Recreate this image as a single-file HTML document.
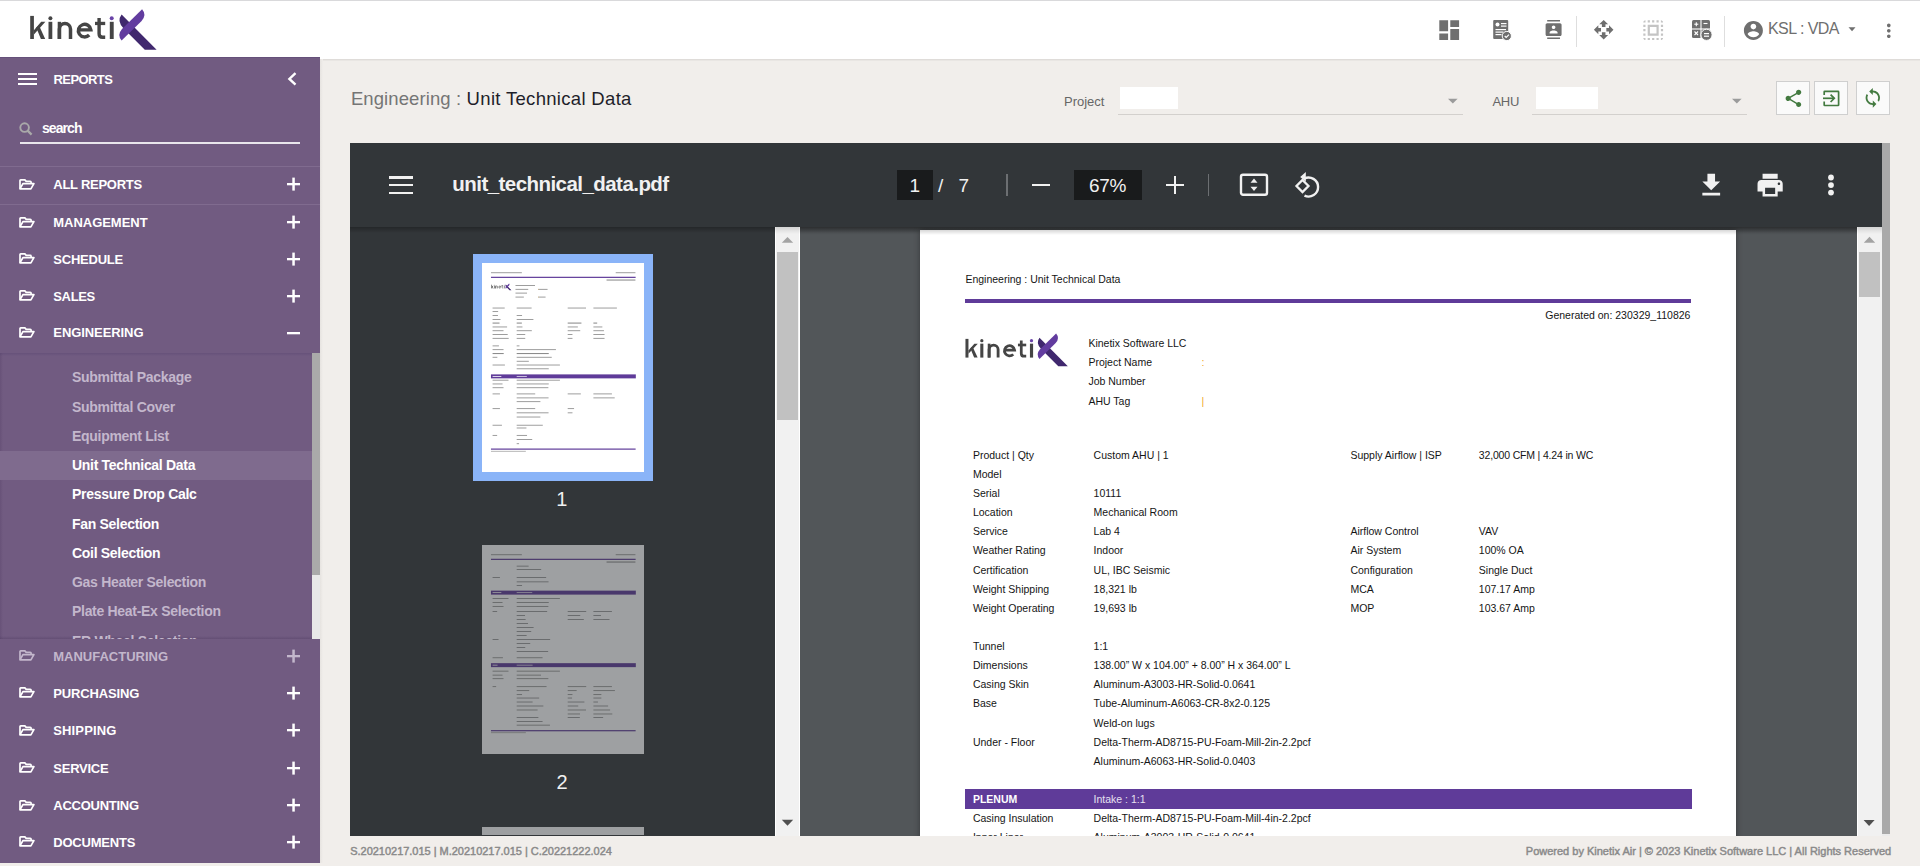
<!DOCTYPE html>
<html><head><meta charset="utf-8"><style>
html,body{margin:0;padding:0;width:1920px;height:866px;overflow:hidden;font-family:"Liberation Sans", sans-serif;}
.t{position:absolute;white-space:pre;}
.r{position:absolute;display:block;}
</style></head><body>
<div class="r" style="left:0px;top:0px;width:1920px;height:866px;background:#f1eeeb;"></div><div class="r" style="left:0px;top:0px;width:1920px;height:59px;background:#ffffff;"></div><div class="r" style="left:0px;top:0px;width:1920px;height:1px;background:#d9d9db;"></div><div class="r" style="left:320px;top:59px;width:1600px;height:2px;background:linear-gradient(#dad7d4,#eeebe8);"></div><div class="r" style="left:320px;top:59px;width:3px;height:804px;background:linear-gradient(90deg,#e6e3e0,#f1eeeb);"></div><svg class="r" style="left:0px;top:0px;" width="170" height="57" viewBox="0 0 170 57">
<g fill="#454545">
<rect x="30.2" y="15.9" width="3.7" height="23.1"/>
<polygon points="33.9,30.2 41.2,21.8 45.4,21.8 33.9,34.4"/>
<polygon points="36.2,27.6 38.9,25.2 45.2,39 40.9,39"/>
<rect x="48.5" y="21.8" width="3.8" height="17.2"/>
<circle cx="50.4" cy="18.2" r="2"/>
<rect x="57.7" y="21.8" width="3.4" height="17.2"/>
<path d="M59.4,39 V29.1 A5.55,5.55 0 0 1 70.5,29.1 V39" fill="none" stroke="#454545" stroke-width="3.5"/>
<path d="M78.4,29.9 H90.9 A6.3,6.3 0 1 0 89.2,35" fill="none" stroke="#454545" stroke-width="3.4"/>
<path d="M99.1,17.9 V33.8 Q99.1,37.3 102.6,37.3 H105.2" fill="none" stroke="#454545" stroke-width="3.4"/>
<rect x="95" y="21.8" width="10.2" height="3.3"/>
<rect x="109.8" y="21.8" width="3.9" height="17.2"/>
</g>
<circle cx="111.7" cy="18.2" r="2" fill="#6a43a8"/>
<path d="M121.6,14.6 L156.6,49.8 L144.8,49.8 L123.6,28.4 Q116.4,21.2 121.6,14.6 Z" fill="#40286e"/>
<path d="M142.1,9.2 Q147,14.8 141.6,20.9 L121.6,40.6 Q116.8,35 122,29 Z" fill="#623c9f"/>
</svg><div class="r" style="left:0px;top:57px;width:320px;height:806px;background:#715b81;"></div><div class="r" style="left:0px;top:57px;width:320px;height:1px;background:#65507a;"></div><div class="r" style="left:18px;top:73px;width:19px;height:2px;background:#ffffff;"></div><div class="r" style="left:18px;top:78px;width:19px;height:2px;background:#ffffff;"></div><div class="r" style="left:18px;top:83px;width:19px;height:2px;background:#ffffff;"></div><div class="t" style="left:53.5px;top:73.10px;font-size:13px;line-height:13px;color:#fff;font-weight:bold;letter-spacing:-0.59px;">REPORTS</div><svg class="r" style="left:280px;top:65px;" width="24" height="28" viewBox="0 0 24 28"><polyline points="15.5,8.2 9.4,13.9 15.5,19.6" fill="none" stroke="#fff" stroke-width="2.4"/></svg><svg class="r" style="left:18px;top:121px;" width="16" height="16" viewBox="0 0 16 16"><circle cx="6.6" cy="6.6" r="4.3" fill="none" stroke="#a9a9a9" stroke-width="1.9"/><line x1="9.6" y1="9.6" x2="13.6" y2="13.6" stroke="#a9a9a9" stroke-width="2.2"/></svg><div class="t" style="left:42px;top:121.35px;font-size:14px;line-height:14px;color:#fff;font-weight:bold;letter-spacing:-0.93px;">search</div><div class="r" style="left:20px;top:142px;width:280px;height:2px;background:#e9e6ec;"></div><div class="r" style="left:0px;top:166px;width:320px;height:1px;background:#806b8f;"></div><div class="r" style="left:0px;top:204px;width:320px;height:1px;background:#806b8f;"></div><svg class="r" style="left:18.8px;top:178.6px;" width="17" height="12" viewBox="0 0 17 12"><path d="M1,9.8 V1.6 Q1,0.9 1.7,0.9 H5.9 L7.2,2.4 H11.3 Q12.1,2.4 12.1,3.2 V4.4" fill="none" stroke="#fff" stroke-width="1.7" stroke-linejoin="round"/><path d="M1,9.8 L3.9,4.6 H14.9 L11.9,9.8 Z" fill="none" stroke="#fff" stroke-width="1.7" stroke-linejoin="round"/></svg><div class="t" style="left:53.3px;top:178.20px;font-size:13px;line-height:13px;color:#fff;font-weight:bold;letter-spacing:-0.259px;">ALL REPORTS</div><svg class="r" style="left:286px;top:177.4px;" width="15" height="14" viewBox="0 0 15 14"><rect x="1" y="6" width="13" height="2.3" fill="#fff"/><rect x="6.3" y="0.6" width="2.5" height="13" fill="#fff"/></svg><svg class="r" style="left:18.8px;top:216.5px;" width="17" height="12" viewBox="0 0 17 12"><path d="M1,9.8 V1.6 Q1,0.9 1.7,0.9 H5.9 L7.2,2.4 H11.3 Q12.1,2.4 12.1,3.2 V4.4" fill="none" stroke="#fff" stroke-width="1.7" stroke-linejoin="round"/><path d="M1,9.8 L3.9,4.6 H14.9 L11.9,9.8 Z" fill="none" stroke="#fff" stroke-width="1.7" stroke-linejoin="round"/></svg><div class="t" style="left:53.3px;top:216.10px;font-size:13px;line-height:13px;color:#fff;font-weight:bold;letter-spacing:-0.034px;">MANAGEMENT</div><svg class="r" style="left:286px;top:215.3px;" width="15" height="14" viewBox="0 0 15 14"><rect x="1" y="6" width="13" height="2.3" fill="#fff"/><rect x="6.3" y="0.6" width="2.5" height="13" fill="#fff"/></svg><svg class="r" style="left:18.8px;top:253.39999999999998px;" width="17" height="12" viewBox="0 0 17 12"><path d="M1,9.8 V1.6 Q1,0.9 1.7,0.9 H5.9 L7.2,2.4 H11.3 Q12.1,2.4 12.1,3.2 V4.4" fill="none" stroke="#fff" stroke-width="1.7" stroke-linejoin="round"/><path d="M1,9.8 L3.9,4.6 H14.9 L11.9,9.8 Z" fill="none" stroke="#fff" stroke-width="1.7" stroke-linejoin="round"/></svg><div class="t" style="left:53.3px;top:253.00px;font-size:13px;line-height:13px;color:#fff;font-weight:bold;letter-spacing:-0.229px;">SCHEDULE</div><svg class="r" style="left:286px;top:252.2px;" width="15" height="14" viewBox="0 0 15 14"><rect x="1" y="6" width="13" height="2.3" fill="#fff"/><rect x="6.3" y="0.6" width="2.5" height="13" fill="#fff"/></svg><svg class="r" style="left:18.8px;top:290.2px;" width="17" height="12" viewBox="0 0 17 12"><path d="M1,9.8 V1.6 Q1,0.9 1.7,0.9 H5.9 L7.2,2.4 H11.3 Q12.1,2.4 12.1,3.2 V4.4" fill="none" stroke="#fff" stroke-width="1.7" stroke-linejoin="round"/><path d="M1,9.8 L3.9,4.6 H14.9 L11.9,9.8 Z" fill="none" stroke="#fff" stroke-width="1.7" stroke-linejoin="round"/></svg><div class="t" style="left:53.3px;top:289.80px;font-size:13px;line-height:13px;color:#fff;font-weight:bold;letter-spacing:-0.36px;">SALES</div><svg class="r" style="left:286px;top:289.0px;" width="15" height="14" viewBox="0 0 15 14"><rect x="1" y="6" width="13" height="2.3" fill="#fff"/><rect x="6.3" y="0.6" width="2.5" height="13" fill="#fff"/></svg><svg class="r" style="left:18.8px;top:326.8px;" width="17" height="12" viewBox="0 0 17 12"><path d="M1,9.8 V1.6 Q1,0.9 1.7,0.9 H5.9 L7.2,2.4 H11.3 Q12.1,2.4 12.1,3.2 V4.4" fill="none" stroke="#fff" stroke-width="1.7" stroke-linejoin="round"/><path d="M1,9.8 L3.9,4.6 H14.9 L11.9,9.8 Z" fill="none" stroke="#fff" stroke-width="1.7" stroke-linejoin="round"/></svg><div class="t" style="left:53.3px;top:326.40px;font-size:13px;line-height:13px;color:#fff;font-weight:bold;letter-spacing:-0.081px;">ENGINEERING</div><svg class="r" style="left:286px;top:325.6px;" width="15" height="14" viewBox="0 0 15 14"><rect x="1" y="6" width="13" height="2.3" fill="#fff"/></svg><div class="r" style="left:0px;top:353px;width:312px;height:286px;background:#715b81;"></div><div class="r" style="left:0px;top:353px;width:312px;height:3px;background:linear-gradient(#66517a,rgba(113,91,129,0));"></div><div class="r" style="left:0px;top:636px;width:312px;height:3px;background:linear-gradient(rgba(60,40,80,0),rgba(60,40,80,0.25));"></div><div class="r" style="left:0px;top:353px;width:3px;height:286px;background:linear-gradient(90deg,rgba(60,40,80,0.18),rgba(60,40,80,0));"></div><div class="r" style="left:312px;top:353px;width:8px;height:222px;background:#aaaaaa;"></div><div class="r" style="left:312px;top:575px;width:8px;height:64px;background:#e8e8e8;"></div><div class="r" style="left:0px;top:451px;width:312px;height:29px;background:#7f6b8e;"></div><div class="r" style="left:0;top:353px;width:312px;height:286px;overflow:hidden"><div class="t" style="left:72px;top:17.25px;font-size:14px;line-height:14px;color:#c3b7cc;font-weight:bold;letter-spacing:-0.3px">Submittal Package</div><div class="t" style="left:72px;top:46.50px;font-size:14px;line-height:14px;color:#c3b7cc;font-weight:bold;letter-spacing:-0.3px">Submittal Cover</div><div class="t" style="left:72px;top:75.75px;font-size:14px;line-height:14px;color:#c3b7cc;font-weight:bold;letter-spacing:-0.3px">Equipment List</div><div class="t" style="left:72px;top:105.00px;font-size:14px;line-height:14px;color:#fff;font-weight:bold;letter-spacing:-0.3px">Unit Technical Data</div><div class="t" style="left:72px;top:134.25px;font-size:14px;line-height:14px;color:#fff;font-weight:bold;letter-spacing:-0.3px">Pressure Drop Calc</div><div class="t" style="left:72px;top:163.50px;font-size:14px;line-height:14px;color:#fff;font-weight:bold;letter-spacing:-0.3px">Fan Selection</div><div class="t" style="left:72px;top:192.75px;font-size:14px;line-height:14px;color:#fff;font-weight:bold;letter-spacing:-0.3px">Coil Selection</div><div class="t" style="left:72px;top:222.00px;font-size:14px;line-height:14px;color:#c3b7cc;font-weight:bold;letter-spacing:-0.3px">Gas Heater Selection</div><div class="t" style="left:72px;top:251.25px;font-size:14px;line-height:14px;color:#c3b7cc;font-weight:bold;letter-spacing:-0.3px">Plate Heat-Ex Selection</div><div class="t" style="left:72px;top:280.50px;font-size:14px;line-height:14px;color:#c3b7cc;font-weight:bold;letter-spacing:-0.3px">ER Wheel Selection</div></div><svg class="r" style="left:18.8px;top:650.2px;" width="17" height="12" viewBox="0 0 17 12"><path d="M1,9.8 V1.6 Q1,0.9 1.7,0.9 H5.9 L7.2,2.4 H11.3 Q12.1,2.4 12.1,3.2 V4.4" fill="none" stroke="#c3b7cc" stroke-width="1.7" stroke-linejoin="round"/><path d="M1,9.8 L3.9,4.6 H14.9 L11.9,9.8 Z" fill="none" stroke="#c3b7cc" stroke-width="1.7" stroke-linejoin="round"/></svg><div class="t" style="left:53.3px;top:649.80px;font-size:13px;line-height:13px;color:#c3b7cc;font-weight:bold;letter-spacing:-0.01px;">MANUFACTURING</div><svg class="r" style="left:286px;top:649.0px;" width="15" height="14" viewBox="0 0 15 14"><rect x="1" y="6" width="13" height="2.3" fill="#c3b7cc"/><rect x="6.3" y="0.6" width="2.5" height="13" fill="#c3b7cc"/></svg><svg class="r" style="left:18.8px;top:687.4000000000001px;" width="17" height="12" viewBox="0 0 17 12"><path d="M1,9.8 V1.6 Q1,0.9 1.7,0.9 H5.9 L7.2,2.4 H11.3 Q12.1,2.4 12.1,3.2 V4.4" fill="none" stroke="#fff" stroke-width="1.7" stroke-linejoin="round"/><path d="M1,9.8 L3.9,4.6 H14.9 L11.9,9.8 Z" fill="none" stroke="#fff" stroke-width="1.7" stroke-linejoin="round"/></svg><div class="t" style="left:53.3px;top:687.00px;font-size:13px;line-height:13px;color:#fff;font-weight:bold;letter-spacing:-0.143px;">PURCHASING</div><svg class="r" style="left:286px;top:686.2px;" width="15" height="14" viewBox="0 0 15 14"><rect x="1" y="6" width="13" height="2.3" fill="#fff"/><rect x="6.3" y="0.6" width="2.5" height="13" fill="#fff"/></svg><svg class="r" style="left:18.8px;top:724.5px;" width="17" height="12" viewBox="0 0 17 12"><path d="M1,9.8 V1.6 Q1,0.9 1.7,0.9 H5.9 L7.2,2.4 H11.3 Q12.1,2.4 12.1,3.2 V4.4" fill="none" stroke="#fff" stroke-width="1.7" stroke-linejoin="round"/><path d="M1,9.8 L3.9,4.6 H14.9 L11.9,9.8 Z" fill="none" stroke="#fff" stroke-width="1.7" stroke-linejoin="round"/></svg><div class="t" style="left:53.3px;top:724.10px;font-size:13px;line-height:13px;color:#fff;font-weight:bold;letter-spacing:0.125px;">SHIPPING</div><svg class="r" style="left:286px;top:723.3px;" width="15" height="14" viewBox="0 0 15 14"><rect x="1" y="6" width="13" height="2.3" fill="#fff"/><rect x="6.3" y="0.6" width="2.5" height="13" fill="#fff"/></svg><svg class="r" style="left:18.8px;top:762.4000000000001px;" width="17" height="12" viewBox="0 0 17 12"><path d="M1,9.8 V1.6 Q1,0.9 1.7,0.9 H5.9 L7.2,2.4 H11.3 Q12.1,2.4 12.1,3.2 V4.4" fill="none" stroke="#fff" stroke-width="1.7" stroke-linejoin="round"/><path d="M1,9.8 L3.9,4.6 H14.9 L11.9,9.8 Z" fill="none" stroke="#fff" stroke-width="1.7" stroke-linejoin="round"/></svg><div class="t" style="left:53.3px;top:762.00px;font-size:13px;line-height:13px;color:#fff;font-weight:bold;letter-spacing:-0.256px;">SERVICE</div><svg class="r" style="left:286px;top:761.2px;" width="15" height="14" viewBox="0 0 15 14"><rect x="1" y="6" width="13" height="2.3" fill="#fff"/><rect x="6.3" y="0.6" width="2.5" height="13" fill="#fff"/></svg><svg class="r" style="left:18.8px;top:799.5px;" width="17" height="12" viewBox="0 0 17 12"><path d="M1,9.8 V1.6 Q1,0.9 1.7,0.9 H5.9 L7.2,2.4 H11.3 Q12.1,2.4 12.1,3.2 V4.4" fill="none" stroke="#fff" stroke-width="1.7" stroke-linejoin="round"/><path d="M1,9.8 L3.9,4.6 H14.9 L11.9,9.8 Z" fill="none" stroke="#fff" stroke-width="1.7" stroke-linejoin="round"/></svg><div class="t" style="left:53.3px;top:799.10px;font-size:13px;line-height:13px;color:#fff;font-weight:bold;letter-spacing:-0.256px;">ACCOUNTING</div><svg class="r" style="left:286px;top:798.3px;" width="15" height="14" viewBox="0 0 15 14"><rect x="1" y="6" width="13" height="2.3" fill="#fff"/><rect x="6.3" y="0.6" width="2.5" height="13" fill="#fff"/></svg><svg class="r" style="left:18.8px;top:836.2px;" width="17" height="12" viewBox="0 0 17 12"><path d="M1,9.8 V1.6 Q1,0.9 1.7,0.9 H5.9 L7.2,2.4 H11.3 Q12.1,2.4 12.1,3.2 V4.4" fill="none" stroke="#fff" stroke-width="1.7" stroke-linejoin="round"/><path d="M1,9.8 L3.9,4.6 H14.9 L11.9,9.8 Z" fill="none" stroke="#fff" stroke-width="1.7" stroke-linejoin="round"/></svg><div class="t" style="left:53.3px;top:835.80px;font-size:13px;line-height:13px;color:#fff;font-weight:bold;letter-spacing:-0.222px;">DOCUMENTS</div><svg class="r" style="left:286px;top:835.0px;" width="15" height="14" viewBox="0 0 15 14"><rect x="1" y="6" width="13" height="2.3" fill="#fff"/><rect x="6.3" y="0.6" width="2.5" height="13" fill="#fff"/></svg><svg class="r" style="left:1435.70px;top:16.79px" width="26.40" height="26.40" viewBox="0 0 24 24"><path d="M3 13h8V3H3v10zm0 8h8v-6H3v6zm10 0h8V11h-8v10zm0-18v6h8V3h-8z" fill="#6f6f6f"/></svg><svg class="r" style="left:1492px;top:19px;" width="20" height="22" viewBox="0 0 20 22"><rect x="1.2" y="1" width="15" height="19" rx="1" fill="#6f6f6f"/><g fill="#fff"><circle cx="5.5" cy="5.5" r="2"/><rect x="9" y="4" width="5.5" height="1.2"/><rect x="9" y="6.5" width="5.5" height="1.2"/><rect x="3.5" y="10" width="10.5" height="1.2"/><rect x="3.5" y="12.5" width="8" height="1.2"/><rect x="3.5" y="15" width="6" height="1.2"/></g><circle cx="14.8" cy="17" r="4.6" fill="#6f6f6f" stroke="#fff" stroke-width="1"/><polyline points="12.7,17 14.2,18.5 17,15.6" fill="none" stroke="#fff" stroke-width="1.2"/></svg><svg class="r" style="left:1544.00px;top:19.90px" width="19.20" height="19.20" viewBox="0 0 24 24"><path d="M20 0H4v2h16V0zM4 24h16v-2H4v2zM20 4H4c-1.1 0-2 .9-2 2v12c0 1.1.9 2 2 2h16c1.1 0 2-.9 2-2V6c0-1.1-.9-2-2-2zm-8 2.75c1.24 0 2.25 1.01 2.25 2.25s-1.01 2.25-2.25 2.25S9.75 10.24 9.75 9 10.76 6.75 12 6.75zM17 17H7v-1.5c0-1.67 3.33-2.5 5-2.5s5 .83 5 2.5V17z" fill="#6f6f6f"/></svg><div class="r" style="left:1576px;top:16px;width:1px;height:31px;background:#dedede;"></div><svg class="r" style="left:1593.11px;top:19.11px" width="21.36" height="21.36" viewBox="0 0 24 24"><path d="M10 9h4V6h3l-5-5-5 5h3v3zm-1 1H6V7l-5 5 5 5v-3h3v-4zm14 2l-5-5v3h-3v4h3v3l5-5zm-9 3h-4v3H7l5 5 5-5h-3v-3z" fill="#6f6f6f"/></svg><svg class="r" style="left:1639.70px;top:16.79px" width="26.40" height="26.40" viewBox="0 0 24 24"><path d="M3 5h2V3c-1.1 0-2 .9-2 2zm0 8h2v-2H3v2zm4 8h2v-2H7v2zM3 9h2V7H3v2zm10-6h-2v2h2V3zm6 0v2h2c0-1.1-.9-2-2-2zM5 21v-2H3c0 1.1.9 2 2 2zm-2-4h2v-2H3v2zM9 3H7v2h2V3zm2 18h2v-2h-2v2zm8-8h2v-2h-2v2zm0 8c1.1 0 2-.9 2-2h-2v2zm0-12h2V7h-2v2zm0 8h2v-2h-2v2zm-4 4h2v-2h-2v2zm0-16h2V3h-2v2zM7 17h10V7H7v10zm2-8h6v6H9V9z" fill="#c4c4c4"/></svg><svg class="r" style="left:1691px;top:19px;" width="23" height="22" viewBox="0 0 23 22"><rect x="1" y="1" width="18" height="18" rx="1.5" fill="#6f6f6f"/><g stroke="#fff" stroke-width="1.1"><line x1="1" y1="10" x2="19" y2="10"/><line x1="10" y1="1" x2="10" y2="19"/><line x1="3.3" y1="5.2" x2="7.3" y2="5.2"/><line x1="5.3" y1="3.2" x2="5.3" y2="7.2"/><line x1="12.5" y1="4.5" x2="16.5" y2="4.5"/><line x1="3.5" y1="12.5" x2="7" y2="16"/><line x1="7" y1="12.5" x2="3.5" y2="16"/></g><circle cx="15.5" cy="15.8" r="5.6" fill="#6f6f6f" stroke="#fff" stroke-width="1"/><g stroke="#fff" stroke-width="1.2"><line x1="13" y1="14.6" x2="18" y2="14.6"/><line x1="13" y1="17.2" x2="18" y2="17.2"/></g></svg><div class="r" style="left:1724px;top:16px;width:1px;height:31px;background:#dedede;"></div><svg class="r" style="left:1741.97px;top:19.06px" width="22.80" height="22.80" viewBox="0 0 24 24"><path d="M12 2C6.48 2 2 6.48 2 12s4.48 10 10 10 10-4.48 10-10S17.52 2 12 2zm0 3c1.66 0 3 1.34 3 3s-1.34 3-3 3-3-1.34-3-3 1.34-3 3-3zm0 14.2c-2.5 0-4.71-1.28-6-3.22.03-1.99 4-3.08 6-3.08 1.99 0 5.970 1.09 6 3.08-1.29 1.94-3.5 3.22-6 3.22z" fill="#6f6f6f"/></svg><div class="t" style="left:1768px;top:21.26px;font-size:16px;line-height:16px;color:#6f6f6f;font-weight:normal;letter-spacing:-0.55px;">KSL : VDA</div><svg class="r" style="left:1848px;top:27px;" width="9" height="5" viewBox="0 0 9 5"><polygon points="0.5,0.3 7.5,0.3 4,4.3" fill="#6f6f6f"/></svg><svg class="r" style="left:1877.80px;top:19.80px" width="21.60" height="21.60" viewBox="0 0 24 24"><path d="M12 8c1.1 0 2-.9 2-2s-.9-2-2-2-2 .9-2 2 .9 2 2 2zm0 2c-1.1 0-2 .9-2 2s.9 2 2 2 2-.9 2-2-.9-2-2-2zm0 6c-1.1 0-2 .9-2 2s.9 2 2 2 2-.9 2-2-.9-2-2-2z" fill="#6f6f6f"/></svg><div class="t" style="left:350.9px;top:89.54px;font-size:18.5px;line-height:18.5px;color:#757575;font-weight:normal;letter-spacing:0.1px;">Engineering : </div><div class="t" style="left:466.6px;top:89.54px;font-size:18.5px;line-height:18.5px;color:#1e1e2a;font-weight:normal;letter-spacing:0.32px;">Unit Technical Data</div><div class="t" style="left:1064px;top:94.70px;font-size:13px;line-height:13px;color:#666;font-weight:normal;letter-spacing:0px;">Project</div><div class="r" style="left:1120px;top:87px;width:58px;height:22px;background:#fff;"></div><div class="r" style="left:1118px;top:114px;width:345px;height:1px;background:#d3d0cd;"></div><svg class="r" style="left:1447px;top:98px;" width="12" height="7" viewBox="0 0 12 7"><polygon points="1,0.8 10.6,0.8 5.8,5.6" fill="#9b9b9b"/></svg><div class="t" style="left:1492.5px;top:94.70px;font-size:13px;line-height:13px;color:#666;font-weight:normal;letter-spacing:-0.3px;">AHU</div><div class="r" style="left:1536px;top:87px;width:62px;height:22px;background:#fff;"></div><div class="r" style="left:1532px;top:114px;width:215px;height:1px;background:#d3d0cd;"></div><svg class="r" style="left:1731px;top:98px;" width="12" height="7" viewBox="0 0 12 7"><polygon points="1,0.8 10.6,0.8 5.8,5.6" fill="#9b9b9b"/></svg><div class="r" style="left:1776px;top:81px;width:34px;height:34px;background:#fafafa;box-sizing:border-box;border:1px solid #cfcfcf"></div><div class="r" style="left:1814px;top:81px;width:34px;height:34px;background:#fafafa;box-sizing:border-box;border:1px solid #cfcfcf"></div><div class="r" style="left:1856px;top:81px;width:34px;height:34px;background:#fafafa;box-sizing:border-box;border:1px solid #cfcfcf"></div><svg class="r" style="left:1782.59px;top:87.80px" width="20.88" height="20.88" viewBox="0 0 24 24"><path d="M18 16.08c-.76 0-1.44.3-1.96.77L8.91 12.7c.05-.23.09-.46.09-.7s-.04-.47-.09-.7l7.05-4.11c.54.5 1.25.81 2.04.81 1.66 0 3-1.34 3-3s-1.34-3-3-3-3 1.34-3 3c0 .24.04.47.09.7L8.040 9.81C7.5 9.31 6.79 9 6 9c-1.66 0-3 1.34-3 3s1.34 3 3 3c.79 0 1.5-.31 2.04-.81l7.12 4.16c-.05.21-.08.43-.08.65 0 1.61 1.31 2.92 2.92 2.92 1.61 0 2.92-1.31 2.92-2.92s-1.31-2.92-2.92-2.92z" fill="#437a40"/></svg><svg class="r" style="left:1814px;top:81px;" width="34" height="34" viewBox="0 0 34 34"><path d="M10.2,14 V10.8 Q10.2,10.3 10.7,10.3 H24 Q24.6,10.3 24.6,10.9 V23.9 Q24.6,24.5 24,24.5 H10.7 Q10.2,24.5 10.2,24 V20.6" fill="none" stroke="#437a40" stroke-width="1.7"/><line x1="9" y1="17.3" x2="20.2" y2="17.3" stroke="#437a40" stroke-width="1.7"/><polyline points="16.6,13.6 20.3,17.3 16.6,21" fill="none" stroke="#437a40" stroke-width="1.7"/></svg><svg class="r" style="left:1862.10px;top:87.20px" width="21.60" height="21.60" viewBox="0 0 24 24"><path d="M12 4V1L8 5l4 4V6c3.31 0 6 2.69 6 6 0 1.01-.25 1.97-.7 2.8l1.46 1.46C19.54 15.03 20 13.57 20 12c0-4.42-3.58-8-8-8zm0 14c-3.31 0-6-2.69-6-6 0-1.01.25-1.97.7-2.8L5.24 7.74C4.46 8.97 4 10.43 4 12c0 4.420 3.58 8 8 8v3l4-4-4-4v3z" fill="#437a40"/></svg><div class="r" style="left:1882px;top:143px;width:8px;height:693px;background:#ebebeb;"></div><div class="r" style="left:1882px;top:143px;width:8px;height:691px;background:#a9a9a9;"></div><div class="r" style="left:350px;top:143px;width:1532px;height:84px;background:#323639;"></div><div class="r" style="left:350px;top:227px;width:425px;height:609px;background:#323639;"></div><div class="r" style="left:800px;top:227px;width:1057px;height:609px;background:#525659;"></div><div class="r" style="left:350px;top:227px;width:1532px;height:6px;background:linear-gradient(rgba(0,0,0,0.28),rgba(0,0,0,0));"></div><div class="r" style="left:389px;top:176.3px;width:24px;height:2.4px;background:#f1f1f1;"></div><div class="r" style="left:389px;top:184px;width:24px;height:2.4px;background:#f1f1f1;"></div><div class="r" style="left:389px;top:191.5px;width:24px;height:2.4px;background:#f1f1f1;"></div><div class="t" style="left:452.3px;top:174.25px;font-size:20.5px;line-height:20.5px;color:#f1f1f1;font-weight:bold;letter-spacing:-0.55px;">unit_technical_data.pdf</div><div class="r" style="left:897px;top:170px;width:36px;height:30px;background:#191b1c;"></div><div class="t" style="left:909.5px;top:175.52px;font-size:19px;line-height:19px;color:#f1f1f1;font-weight:normal;letter-spacing:0px;">1</div><div class="t" style="left:938px;top:175.52px;font-size:19px;line-height:19px;color:#f1f1f1;font-weight:normal;letter-spacing:0px;">/</div><div class="t" style="left:958.5px;top:175.52px;font-size:19px;line-height:19px;color:#f1f1f1;font-weight:normal;letter-spacing:0px;">7</div><div class="r" style="left:1006px;top:174px;width:1.5px;height:22px;background:#6c6f72;"></div><div class="r" style="left:1032px;top:183.7px;width:18px;height:2.2px;background:#f1f1f1;"></div><div class="r" style="left:1074px;top:170px;width:68px;height:30px;background:#191b1c;"></div><div class="t" style="left:1089px;top:175.52px;font-size:19px;line-height:19px;color:#f1f1f1;font-weight:normal;letter-spacing:-0.3px;">67%</div><div class="r" style="left:1166px;top:183.7px;width:18px;height:2.2px;background:#f1f1f1;"></div><div class="r" style="left:1174px;top:176px;width:2.2px;height:18px;background:#f1f1f1;"></div><div class="r" style="left:1207.5px;top:174px;width:1.5px;height:22px;background:#6c6f72;"></div><svg class="r" style="left:1238px;top:172px;" width="32" height="26" viewBox="0 0 32 26"><rect x="3" y="2.8" width="26" height="20" rx="2" fill="none" stroke="#f1f1f1" stroke-width="2.4"/><polygon points="16,6.5 19.5,10.8 12.5,10.8" fill="#f1f1f1"/><polygon points="16,19 19.5,14.7 12.5,14.7" fill="#f1f1f1"/></svg><svg class="r" style="left:1292px;top:170px;" width="32" height="30" viewBox="0 0 32 30"><path d="M12.2,8.6 A9.5,9.5 0 1 1 12.5,25.6" fill="none" stroke="#f1f1f1" stroke-width="2.4"/><polygon points="13.8,2 13.8,11.8 8.2,6.9" fill="#f1f1f1"/><polygon points="10.5,10 16.5,16 10.5,22 4.5,16" fill="none" stroke="#f1f1f1" stroke-width="2.3"/></svg><svg class="r" style="left:1695.55px;top:169.95px" width="30.48" height="30.48" viewBox="0 0 24 24"><path d="M19 9h-4V3H9v6H5l7 7 7-7zM5 18v2h14v-2H5z" fill="#f1f1f1"/></svg><svg class="r" style="left:1755.48px;top:169.98px" width="30.24" height="30.24" viewBox="0 0 24 24"><path d="M19 8H5c-1.66 0-3 1.34-3 3v6h4v4h12v-4h4v-6c0-1.66-1.340-3-3-3zm-3 11H8v-5h8v5zm3-7c-.55 0-1-.45-1-1s.45-1 1-1 1 .45 1 1-.45 1-1 1zm-1-9H6v4h12V3z" fill="#f1f1f1"/></svg><svg class="r" style="left:1824px;top:170px;" width="14" height="30" viewBox="0 0 14 30"><g fill="#f1f1f1"><circle cx="7" cy="7.5" r="2.9"/><circle cx="7" cy="15.1" r="2.9"/><circle cx="7" cy="22.6" r="2.9"/></g></svg><div class="r" style="left:800px;top:227px;width:1057px;height:609px;overflow:hidden"><div class="r" style="left:120px;top:3px;width:816px;height:1056px;background:#fff;box-shadow:0 0 6px rgba(0,0,0,0.35)"><div class="t" style="left:45.4px;top:43.91px;font-size:10.5px;line-height:10.5px;color:#151515;font-weight:normal;letter-spacing:0px">Engineering : Unit Technical Data</div><div class="r" style="left:45px;top:69.1px;width:726px;height:3.6px;background:#5f3b99"></div><div class="t" style="right:45.60000000000002px;top:80.31px;font-size:10.5px;line-height:10.5px;color:#151515;font-weight:normal;letter-spacing:0px">Generated on: 230329_110826</div><svg class="r" style="left:20.5px;top:95.9px;transform:scale(0.81);transform-origin:0 0" width="170" height="57" viewBox="0 0 170 57">
<g fill="#454545">
<rect x="30.2" y="15.9" width="3.7" height="23.1"/>
<polygon points="33.9,30.2 41.2,21.8 45.4,21.8 33.9,34.4"/>
<polygon points="36.2,27.6 38.9,25.2 45.2,39 40.9,39"/>
<rect x="48.5" y="21.8" width="3.8" height="17.2"/>
<circle cx="50.4" cy="18.2" r="2"/>
<rect x="57.7" y="21.8" width="3.4" height="17.2"/>
<path d="M59.4,39 V29.1 A5.55,5.55 0 0 1 70.5,29.1 V39" fill="none" stroke="#454545" stroke-width="3.5"/>
<path d="M78.4,29.9 H90.9 A6.3,6.3 0 1 0 89.2,35" fill="none" stroke="#454545" stroke-width="3.4"/>
<path d="M99.1,17.9 V33.8 Q99.1,37.3 102.6,37.3 H105.2" fill="none" stroke="#454545" stroke-width="3.4"/>
<rect x="95" y="21.8" width="10.2" height="3.3"/>
<rect x="109.8" y="21.8" width="3.9" height="17.2"/>
</g>
<circle cx="111.7" cy="18.2" r="2" fill="#6a43a8"/>
<path d="M121.6,14.6 L156.6,49.8 L144.8,49.8 L123.6,28.4 Q116.4,21.2 121.6,14.6 Z" fill="#40286e"/>
<path d="M142.1,9.2 Q147,14.8 141.6,20.9 L121.6,40.6 Q116.8,35 122,29 Z" fill="#623c9f"/>
</svg><div class="t" style="left:168.4px;top:107.91px;font-size:10.5px;line-height:10.5px;color:#151515;font-weight:normal;letter-spacing:0px">Kinetix Software LLC</div><div class="t" style="left:168.4px;top:126.91px;font-size:10.5px;line-height:10.5px;color:#151515;font-weight:normal;letter-spacing:0px">Project Name</div><div class="t" style="left:168.4px;top:146.01px;font-size:10.5px;line-height:10.5px;color:#151515;font-weight:normal;letter-spacing:0px">Job Number</div><div class="t" style="left:168.4px;top:165.51px;font-size:10.5px;line-height:10.5px;color:#151515;font-weight:normal;letter-spacing:0px">AHU Tag</div><div class="t" style="left:281.5px;top:126.91px;font-size:10.5px;line-height:10.5px;color:#f0a830;font-weight:normal;letter-spacing:0px">:</div><div class="t" style="left:281.5px;top:165.51px;font-size:10.5px;line-height:10.5px;color:#f0a830;font-weight:normal;letter-spacing:0px">|</div><div class="t" style="left:52.9px;top:220.41px;font-size:10.5px;line-height:10.5px;color:#151515;font-weight:normal;letter-spacing:0px">Product | Qty</div><div class="t" style="left:173.6px;top:220.41px;font-size:10.5px;line-height:10.5px;color:#151515;font-weight:normal;letter-spacing:0px">Custom AHU | 1</div><div class="t" style="left:430.4px;top:220.41px;font-size:10.5px;line-height:10.5px;color:#151515;font-weight:normal;letter-spacing:0px">Supply Airflow | ISP</div><div class="t" style="left:558.8px;top:220.41px;font-size:10.5px;line-height:10.5px;color:#151515;font-weight:normal;letter-spacing:0px"><span style="letter-spacing:-0.17px">32,000 CFM | 4.24 in WC</span></div><div class="t" style="left:52.9px;top:239.11px;font-size:10.5px;line-height:10.5px;color:#151515;font-weight:normal;letter-spacing:0px">Model</div><div class="t" style="left:52.9px;top:258.21px;font-size:10.5px;line-height:10.5px;color:#151515;font-weight:normal;letter-spacing:0px">Serial</div><div class="t" style="left:173.6px;top:258.21px;font-size:10.5px;line-height:10.5px;color:#151515;font-weight:normal;letter-spacing:0px">10111</div><div class="t" style="left:52.9px;top:277.41px;font-size:10.5px;line-height:10.5px;color:#151515;font-weight:normal;letter-spacing:0px">Location</div><div class="t" style="left:173.6px;top:277.41px;font-size:10.5px;line-height:10.5px;color:#151515;font-weight:normal;letter-spacing:0px">Mechanical Room</div><div class="t" style="left:52.9px;top:296.31px;font-size:10.5px;line-height:10.5px;color:#151515;font-weight:normal;letter-spacing:0px">Service</div><div class="t" style="left:173.6px;top:296.31px;font-size:10.5px;line-height:10.5px;color:#151515;font-weight:normal;letter-spacing:0px">Lab 4</div><div class="t" style="left:430.4px;top:296.31px;font-size:10.5px;line-height:10.5px;color:#151515;font-weight:normal;letter-spacing:0px">Airflow Control</div><div class="t" style="left:558.8px;top:296.31px;font-size:10.5px;line-height:10.5px;color:#151515;font-weight:normal;letter-spacing:0px">VAV</div><div class="t" style="left:52.9px;top:315.41px;font-size:10.5px;line-height:10.5px;color:#151515;font-weight:normal;letter-spacing:0px">Weather Rating</div><div class="t" style="left:173.6px;top:315.41px;font-size:10.5px;line-height:10.5px;color:#151515;font-weight:normal;letter-spacing:0px">Indoor</div><div class="t" style="left:430.4px;top:315.41px;font-size:10.5px;line-height:10.5px;color:#151515;font-weight:normal;letter-spacing:0px">Air System</div><div class="t" style="left:558.8px;top:315.41px;font-size:10.5px;line-height:10.5px;color:#151515;font-weight:normal;letter-spacing:0px">100% OA</div><div class="t" style="left:52.9px;top:335.11px;font-size:10.5px;line-height:10.5px;color:#151515;font-weight:normal;letter-spacing:0px">Certification</div><div class="t" style="left:173.6px;top:335.11px;font-size:10.5px;line-height:10.5px;color:#151515;font-weight:normal;letter-spacing:0px">UL, IBC Seismic</div><div class="t" style="left:430.4px;top:335.11px;font-size:10.5px;line-height:10.5px;color:#151515;font-weight:normal;letter-spacing:0px">Configuration</div><div class="t" style="left:558.8px;top:335.11px;font-size:10.5px;line-height:10.5px;color:#151515;font-weight:normal;letter-spacing:0px">Single Duct</div><div class="t" style="left:52.9px;top:354.21px;font-size:10.5px;line-height:10.5px;color:#151515;font-weight:normal;letter-spacing:0px">Weight Shipping</div><div class="t" style="left:173.6px;top:354.21px;font-size:10.5px;line-height:10.5px;color:#151515;font-weight:normal;letter-spacing:0px">18,321 lb</div><div class="t" style="left:430.4px;top:354.21px;font-size:10.5px;line-height:10.5px;color:#151515;font-weight:normal;letter-spacing:0px">MCA</div><div class="t" style="left:558.8px;top:354.21px;font-size:10.5px;line-height:10.5px;color:#151515;font-weight:normal;letter-spacing:0px">107.17 Amp</div><div class="t" style="left:52.9px;top:373.11px;font-size:10.5px;line-height:10.5px;color:#151515;font-weight:normal;letter-spacing:0px">Weight Operating</div><div class="t" style="left:173.6px;top:373.11px;font-size:10.5px;line-height:10.5px;color:#151515;font-weight:normal;letter-spacing:0px">19,693 lb</div><div class="t" style="left:430.4px;top:373.11px;font-size:10.5px;line-height:10.5px;color:#151515;font-weight:normal;letter-spacing:0px">MOP</div><div class="t" style="left:558.8px;top:373.11px;font-size:10.5px;line-height:10.5px;color:#151515;font-weight:normal;letter-spacing:0px">103.67 Amp</div><div class="t" style="left:52.9px;top:411.01px;font-size:10.5px;line-height:10.5px;color:#151515;font-weight:normal;letter-spacing:0px">Tunnel</div><div class="t" style="left:173.6px;top:411.01px;font-size:10.5px;line-height:10.5px;color:#151515;font-weight:normal;letter-spacing:0px">1:1</div><div class="t" style="left:52.9px;top:429.91px;font-size:10.5px;line-height:10.5px;color:#151515;font-weight:normal;letter-spacing:0px">Dimensions</div><div class="t" style="left:173.6px;top:429.91px;font-size:10.5px;line-height:10.5px;color:#151515;font-weight:normal;letter-spacing:0px">138.00&#8221; W x 104.00&#8221; + 8.00&#8221; H x 364.00&#8221; L</div><div class="t" style="left:52.9px;top:449.31px;font-size:10.5px;line-height:10.5px;color:#151515;font-weight:normal;letter-spacing:0px">Casing Skin</div><div class="t" style="left:173.6px;top:449.31px;font-size:10.5px;line-height:10.5px;color:#151515;font-weight:normal;letter-spacing:0px">Aluminum-A3003-HR-Solid-0.0641</div><div class="t" style="left:52.9px;top:468.21px;font-size:10.5px;line-height:10.5px;color:#151515;font-weight:normal;letter-spacing:0px">Base</div><div class="t" style="left:173.6px;top:468.21px;font-size:10.5px;line-height:10.5px;color:#151515;font-weight:normal;letter-spacing:0px">Tube-Aluminum-A6063-CR-8x2-0.125</div><div class="t" style="left:173.6px;top:488.11px;font-size:10.5px;line-height:10.5px;color:#151515;font-weight:normal;letter-spacing:0px">Weld-on lugs</div><div class="t" style="left:52.9px;top:507.01px;font-size:10.5px;line-height:10.5px;color:#151515;font-weight:normal;letter-spacing:0px">Under - Floor</div><div class="t" style="left:173.6px;top:507.01px;font-size:10.5px;line-height:10.5px;color:#151515;font-weight:normal;letter-spacing:0px">Delta-Therm-AD8715-PU-Foam-Mill-2in-2.2pcf</div><div class="t" style="left:173.6px;top:525.91px;font-size:10.5px;line-height:10.5px;color:#151515;font-weight:normal;letter-spacing:0px">Aluminum-A6063-HR-Solid-0.0403</div><div class="t" style="left:52.9px;top:583.11px;font-size:10.5px;line-height:10.5px;color:#151515;font-weight:normal;letter-spacing:0px">Casing Insulation</div><div class="t" style="left:173.6px;top:583.11px;font-size:10.5px;line-height:10.5px;color:#151515;font-weight:normal;letter-spacing:0px">Delta-Therm-AD8715-PU-Foam-Mill-4in-2.2pcf</div><div class="t" style="left:52.9px;top:602.11px;font-size:10.5px;line-height:10.5px;color:#151515;font-weight:normal;letter-spacing:0px">Inner Liner</div><div class="t" style="left:173.6px;top:602.11px;font-size:10.5px;line-height:10.5px;color:#151515;font-weight:normal;letter-spacing:0px">Aluminum-A3003-HR-Solid-0.0641</div><div class="t" style="left:52.9px;top:621.11px;font-size:10.5px;line-height:10.5px;color:#151515;font-weight:normal;letter-spacing:0px">Floor Finish</div><div class="t" style="left:173.6px;top:621.11px;font-size:10.5px;line-height:10.5px;color:#151515;font-weight:normal;letter-spacing:0px">Aluminum-A3003-HR-Tread-0.125</div><div class="t" style="left:52.9px;top:652.11px;font-size:10.5px;line-height:10.5px;color:#151515;font-weight:normal;letter-spacing:0px">Damper</div><div class="t" style="left:173.6px;top:652.11px;font-size:10.5px;line-height:10.5px;color:#151515;font-weight:normal;letter-spacing:0px">OBD | Ruskin CD50</div><div class="t" style="left:430.4px;top:652.11px;font-size:10.5px;line-height:10.5px;color:#151515;font-weight:normal;letter-spacing:0px">Supply Airflow</div><div class="t" style="left:558.8px;top:652.11px;font-size:10.5px;line-height:10.5px;color:#151515;font-weight:normal;letter-spacing:0px">Supply 32,000 CFM</div><div class="t" style="left:173.6px;top:671.71px;font-size:10.5px;line-height:10.5px;color:#151515;font-weight:normal;letter-spacing:0px">Opposed Blade | Aluminum Frame</div><div class="t" style="left:558.8px;top:671.71px;font-size:10.5px;line-height:10.5px;color:#151515;font-weight:normal;letter-spacing:0px">1,000 fpm | 0.07 in WC</div><div class="t" style="left:173.6px;top:691.11px;font-size:10.5px;line-height:10.5px;color:#151515;font-weight:normal;letter-spacing:0px">(1) 104.00 W x 88.00 H in</div><div class="t" style="left:52.9px;top:725.71px;font-size:10.5px;line-height:10.5px;color:#151515;font-weight:normal;letter-spacing:0px">Damper</div><div class="t" style="left:173.6px;top:725.71px;font-size:10.5px;line-height:10.5px;color:#151515;font-weight:normal;letter-spacing:0px">OBD | Ruskin CD50</div><div class="t" style="left:430.4px;top:725.71px;font-size:10.5px;line-height:10.5px;color:#151515;font-weight:normal;letter-spacing:0px">Supply</div><div class="t" style="left:173.6px;top:746.71px;font-size:10.5px;line-height:10.5px;color:#151515;font-weight:normal;letter-spacing:0px">Opposed Blade | Aluminum Frame</div><div class="t" style="left:430.4px;top:746.71px;font-size:10.5px;line-height:10.5px;color:#151515;font-weight:normal;letter-spacing:0px">Spec</div><div class="t" style="left:173.6px;top:767.81px;font-size:10.5px;line-height:10.5px;color:#151515;font-weight:normal;letter-spacing:0px">(1) 104.00 W x 88.00 H in</div><div class="t" style="left:52.9px;top:808.51px;font-size:10.5px;line-height:10.5px;color:#151515;font-weight:normal;letter-spacing:0px">Drain Pan</div><div class="t" style="left:173.6px;top:808.51px;font-size:10.5px;line-height:10.5px;color:#151515;font-weight:normal;letter-spacing:0px">Single 304SS Sloped 16 GA</div><div class="t" style="left:173.6px;top:823.11px;font-size:10.5px;line-height:10.5px;color:#151515;font-weight:normal;letter-spacing:0px">3/4 in NPT</div><div class="t" style="left:52.9px;top:860.11px;font-size:10.5px;line-height:10.5px;color:#151515;font-weight:normal;letter-spacing:0px">Light</div><div class="t" style="left:173.6px;top:860.11px;font-size:10.5px;line-height:10.5px;color:#151515;font-weight:normal;letter-spacing:0px">Vapor Tight</div><div class="t" style="left:173.6px;top:881.11px;font-size:10.5px;line-height:10.5px;color:#151515;font-weight:normal;letter-spacing:0px">LED 20W | 120V</div><div class="t" style="left:173.6px;top:902.11px;font-size:10.5px;line-height:10.5px;color:#151515;font-weight:normal;letter-spacing:0px">(1)</div><div class="r" style="left:44.8px;top:558.8px;width:727px;height:20px;background:#5f3b99"></div><div class="t" style="left:52.9px;top:563.71px;font-size:10.5px;line-height:10.5px;color:#ffffff;font-weight:bold;letter-spacing:0px">PLENUM</div><div class="t" style="left:173.6px;top:563.71px;font-size:10.5px;line-height:10.5px;color:#e6e0f0;font-weight:normal;letter-spacing:0px">Intake : 1:1</div><div class="r" style="left:45px;top:931px;width:726px;height:2.5px;background:#5f3b99"></div><div class="t" style="left:45px;top:941.50px;font-size:6.5px;line-height:6.5px;color:#444;font-weight:normal;letter-spacing:0px">unit_technical_data | Kinetix Software LLC | www.kinetix.com</div></div><div class="r" style="left:0;top:0;width:1057px;height:8px;background:linear-gradient(rgba(0,0,0,0.25),rgba(0,0,0,0))"></div></div><div class="r" style="left:473px;top:254px;width:180px;height:227px;background:#8ab4f8"></div><div class="r" style="left:481.6px;top:262.6px;width:162.6px;height:209.4px;overflow:hidden;background:#fff"><div class="r" style="left:0;top:0;width:816px;height:1056px;transform:scale(0.19926);transform-origin:0 0"><div class="r" style="left:45.4px;top:47.0px;width:155.1px;height:4.2px;background:#858585"></div><div class="r" style="left:45px;top:69.1px;width:726px;height:5.5px;background:#5f3b99"></div><div class="r" style="left:625.2px;top:83.4px;width:145.2px;height:4.2px;background:#858585"></div><svg class="r" style="left:20.5px;top:95.9px;transform:scale(0.81);transform-origin:0 0" width="170" height="57" viewBox="0 0 170 57">
<g fill="#454545">
<rect x="30.2" y="15.9" width="3.7" height="23.1"/>
<polygon points="33.9,30.2 41.2,21.8 45.4,21.8 33.9,34.4"/>
<polygon points="36.2,27.6 38.9,25.2 45.2,39 40.9,39"/>
<rect x="48.5" y="21.8" width="3.8" height="17.2"/>
<circle cx="50.4" cy="18.2" r="2"/>
<rect x="57.7" y="21.8" width="3.4" height="17.2"/>
<path d="M59.4,39 V29.1 A5.55,5.55 0 0 1 70.5,29.1 V39" fill="none" stroke="#454545" stroke-width="3.5"/>
<path d="M78.4,29.9 H90.9 A6.3,6.3 0 1 0 89.2,35" fill="none" stroke="#454545" stroke-width="3.4"/>
<path d="M99.1,17.9 V33.8 Q99.1,37.3 102.6,37.3 H105.2" fill="none" stroke="#454545" stroke-width="3.4"/>
<rect x="95" y="21.8" width="10.2" height="3.3"/>
<rect x="109.8" y="21.8" width="3.9" height="17.2"/>
</g>
<circle cx="111.7" cy="18.2" r="2" fill="#6a43a8"/>
<path d="M121.6,14.6 L156.6,49.8 L144.8,49.8 L123.6,28.4 Q116.4,21.2 121.6,14.6 Z" fill="#40286e"/>
<path d="M142.1,9.2 Q147,14.8 141.6,20.9 L121.6,40.6 Q116.8,35 122,29 Z" fill="#623c9f"/>
</svg><div class="r" style="left:168.4px;top:111.0px;width:98.0px;height:4.2px;background:#858585"></div><div class="r" style="left:168.4px;top:130.0px;width:63.6px;height:4.2px;background:#858585"></div><div class="r" style="left:168.4px;top:149.1px;width:57.2px;height:4.2px;background:#858585"></div><div class="r" style="left:168.4px;top:168.6px;width:41.8px;height:4.2px;background:#858585"></div><div class="r" style="left:281.5px;top:130.0px;width:47.9px;height:4.2px;background:#858585"></div><div class="r" style="left:281.5px;top:168.6px;width:37.3px;height:4.2px;background:#858585"></div><div class="r" style="left:670.6px;top:47.0px;width:99.8px;height:4.2px;background:#858585"></div><div class="r" style="left:281.5px;top:130.0px;width:2.9px;height:4.2px;background:#f0a830"></div><div class="r" style="left:281.5px;top:168.6px;width:2.7px;height:4.2px;background:#f0a830"></div><div class="r" style="left:52.9px;top:223.5px;width:61.1px;height:4.2px;background:#858585"></div><div class="r" style="left:173.6px;top:223.5px;width:75.1px;height:4.2px;background:#858585"></div><div class="r" style="left:430.4px;top:223.5px;width:91.4px;height:4.2px;background:#858585"></div><div class="r" style="left:558.8px;top:223.5px;width:118.3px;height:4.2px;background:#858585"></div><div class="r" style="left:52.9px;top:242.2px;width:28.6px;height:4.2px;background:#858585"></div><div class="r" style="left:52.9px;top:261.3px;width:26.8px;height:4.2px;background:#858585"></div><div class="r" style="left:173.6px;top:261.3px;width:27.6px;height:4.2px;background:#858585"></div><div class="r" style="left:52.9px;top:280.5px;width:39.7px;height:4.2px;background:#858585"></div><div class="r" style="left:173.6px;top:280.5px;width:84.0px;height:4.2px;background:#858585"></div><div class="r" style="left:52.9px;top:299.4px;width:35.0px;height:4.2px;background:#858585"></div><div class="r" style="left:173.6px;top:299.4px;width:26.3px;height:4.2px;background:#858585"></div><div class="r" style="left:430.4px;top:299.4px;width:68.3px;height:4.2px;background:#858585"></div><div class="r" style="left:558.8px;top:299.4px;width:19.5px;height:4.2px;background:#858585"></div><div class="r" style="left:52.9px;top:318.5px;width:72.8px;height:4.2px;background:#858585"></div><div class="r" style="left:173.6px;top:318.5px;width:29.8px;height:4.2px;background:#858585"></div><div class="r" style="left:430.4px;top:318.5px;width:50.8px;height:4.2px;background:#858585"></div><div class="r" style="left:558.8px;top:318.5px;width:44.9px;height:4.2px;background:#858585"></div><div class="r" style="left:52.9px;top:338.2px;width:55.4px;height:4.2px;background:#858585"></div><div class="r" style="left:173.6px;top:338.2px;width:76.4px;height:4.2px;background:#858585"></div><div class="r" style="left:430.4px;top:338.2px;width:62.5px;height:4.2px;background:#858585"></div><div class="r" style="left:558.8px;top:338.2px;width:53.7px;height:4.2px;background:#858585"></div><div class="r" style="left:52.9px;top:357.3px;width:76.3px;height:4.2px;background:#858585"></div><div class="r" style="left:173.6px;top:357.3px;width:43.2px;height:4.2px;background:#858585"></div><div class="r" style="left:430.4px;top:357.3px;width:23.3px;height:4.2px;background:#858585"></div><div class="r" style="left:558.8px;top:357.3px;width:56.0px;height:4.2px;background:#858585"></div><div class="r" style="left:52.9px;top:376.2px;width:81.5px;height:4.2px;background:#858585"></div><div class="r" style="left:173.6px;top:376.2px;width:43.2px;height:4.2px;background:#858585"></div><div class="r" style="left:430.4px;top:376.2px;width:23.9px;height:4.2px;background:#858585"></div><div class="r" style="left:558.8px;top:376.2px;width:56.0px;height:4.2px;background:#858585"></div><div class="r" style="left:52.9px;top:414.1px;width:31.7px;height:4.2px;background:#858585"></div><div class="r" style="left:173.6px;top:414.1px;width:14.6px;height:4.2px;background:#858585"></div><div class="r" style="left:52.9px;top:433.0px;width:54.9px;height:4.2px;background:#858585"></div><div class="r" style="left:173.6px;top:433.0px;width:197.0px;height:4.2px;background:#858585"></div><div class="r" style="left:52.9px;top:452.4px;width:56.0px;height:4.2px;background:#858585"></div><div class="r" style="left:173.6px;top:452.4px;width:161.6px;height:4.2px;background:#858585"></div><div class="r" style="left:52.9px;top:471.3px;width:23.9px;height:4.2px;background:#858585"></div><div class="r" style="left:173.6px;top:471.3px;width:176.4px;height:4.2px;background:#858585"></div><div class="r" style="left:173.6px;top:491.2px;width:61.1px;height:4.2px;background:#858585"></div><div class="r" style="left:52.9px;top:510.1px;width:61.8px;height:4.2px;background:#858585"></div><div class="r" style="left:173.6px;top:510.1px;width:217.0px;height:4.2px;background:#858585"></div><div class="r" style="left:173.6px;top:529.0px;width:161.6px;height:4.2px;background:#858585"></div><div class="r" style="left:52.9px;top:586.2px;width:80.5px;height:4.2px;background:#858585"></div><div class="r" style="left:173.6px;top:586.2px;width:217.0px;height:4.2px;background:#858585"></div><div class="r" style="left:52.9px;top:605.2px;width:50.2px;height:4.2px;background:#858585"></div><div class="r" style="left:173.6px;top:605.2px;width:161.6px;height:4.2px;background:#858585"></div><div class="r" style="left:52.9px;top:624.2px;width:54.8px;height:4.2px;background:#858585"></div><div class="r" style="left:173.6px;top:624.2px;width:159.5px;height:4.2px;background:#858585"></div><div class="r" style="left:52.9px;top:655.2px;width:37.3px;height:4.2px;background:#858585"></div><div class="r" style="left:173.6px;top:655.2px;width:93.2px;height:4.2px;background:#858585"></div><div class="r" style="left:430.4px;top:655.2px;width:65.9px;height:4.2px;background:#858585"></div><div class="r" style="left:558.8px;top:655.2px;width:92.8px;height:4.2px;background:#858585"></div><div class="r" style="left:173.6px;top:674.8px;width:160.3px;height:4.2px;background:#858585"></div><div class="r" style="left:558.8px;top:674.8px;width:107.2px;height:4.2px;background:#858585"></div><div class="r" style="left:173.6px;top:694.2px;width:119.6px;height:4.2px;background:#858585"></div><div class="r" style="left:52.9px;top:728.8px;width:37.3px;height:4.2px;background:#858585"></div><div class="r" style="left:173.6px;top:728.8px;width:93.2px;height:4.2px;background:#858585"></div><div class="r" style="left:430.4px;top:728.8px;width:32.1px;height:4.2px;background:#858585"></div><div class="r" style="left:173.6px;top:749.8px;width:160.3px;height:4.2px;background:#858585"></div><div class="r" style="left:430.4px;top:749.8px;width:23.9px;height:4.2px;background:#858585"></div><div class="r" style="left:173.6px;top:770.9px;width:119.6px;height:4.2px;background:#858585"></div><div class="r" style="left:52.9px;top:811.6px;width:46.7px;height:4.2px;background:#858585"></div><div class="r" style="left:173.6px;top:811.6px;width:131.9px;height:4.2px;background:#858585"></div><div class="r" style="left:173.6px;top:826.2px;width:49.6px;height:4.2px;background:#858585"></div><div class="r" style="left:52.9px;top:863.2px;width:22.8px;height:4.2px;background:#858585"></div><div class="r" style="left:173.6px;top:863.2px;width:52.9px;height:4.2px;background:#858585"></div><div class="r" style="left:173.6px;top:884.2px;width:78.0px;height:4.2px;background:#858585"></div><div class="r" style="left:173.6px;top:905.2px;width:12.8px;height:4.2px;background:#858585"></div><div class="r" style="left:44.8px;top:558.8px;width:727px;height:20px;background:#5f3b99"></div><div class="r" style="left:52.9px;top:566.8px;width:44.3px;height:4.2px;background:#ffffff"></div><div class="r" style="left:173.6px;top:566.8px;width:51.9px;height:4.2px;background:#e6e0f0"></div><div class="r" style="left:45px;top:931px;width:726px;height:5.5px;background:#5f3b99"></div><div class="r" style="left:45.0px;top:943.4px;width:175.3px;height:2.6px;background:#858585"></div></div></div><div class="t" style="left:556.2px;top:488.67px;font-size:20px;line-height:20px;color:#f1f1f1;font-weight:normal;letter-spacing:0px;">1</div><div class="r" style="left:481.6px;top:545px;width:162.6px;height:209px;overflow:hidden;background:#fff;opacity:0.53"><div class="r" style="left:0;top:0;width:816px;height:1056px;transform:scale(0.19926);transform-origin:0 0"><div class="r" style="left:45.4px;top:47.0px;width:155.1px;height:4.2px;background:#858585"></div><div class="r" style="left:45px;top:69.1px;width:726px;height:5.5px;background:#5f3b99"></div><div class="r" style="left:625.2px;top:83.4px;width:145.2px;height:4.2px;background:#858585"></div><div class="r" style="left:670.6px;top:47.0px;width:99.8px;height:4.2px;background:#858585"></div><div class="r" style="left:173.6px;top:104.2px;width:60.7px;height:4.2px;background:#858585"></div><div class="r" style="left:173.6px;top:121.2px;width:123.1px;height:4.2px;background:#858585"></div><div class="r" style="left:52.9px;top:161.2px;width:37.3px;height:4.2px;background:#858585"></div><div class="r" style="left:173.6px;top:161.2px;width:148.0px;height:4.2px;background:#858585"></div><div class="r" style="left:173.6px;top:183.2px;width:160.5px;height:4.2px;background:#858585"></div><div class="r" style="left:173.6px;top:201.2px;width:27.4px;height:4.2px;background:#858585"></div><div class="r" style="left:52.9px;top:266.2px;width:80.5px;height:4.2px;background:#858585"></div><div class="r" style="left:173.6px;top:266.2px;width:217.0px;height:4.2px;background:#858585"></div><div class="r" style="left:52.9px;top:286.2px;width:50.2px;height:4.2px;background:#858585"></div><div class="r" style="left:173.6px;top:286.2px;width:161.6px;height:4.2px;background:#858585"></div><div class="r" style="left:52.9px;top:306.2px;width:54.8px;height:4.2px;background:#858585"></div><div class="r" style="left:173.6px;top:306.2px;width:159.5px;height:4.2px;background:#858585"></div><div class="r" style="left:52.9px;top:332.2px;width:23.3px;height:4.2px;background:#858585"></div><div class="r" style="left:173.6px;top:332.2px;width:153.1px;height:4.2px;background:#858585"></div><div class="r" style="left:430.4px;top:332.2px;width:92.8px;height:4.2px;background:#858585"></div><div class="r" style="left:558.8px;top:332.2px;width:92.8px;height:4.2px;background:#858585"></div><div class="r" style="left:173.6px;top:352.2px;width:42.6px;height:4.2px;background:#858585"></div><div class="r" style="left:430.4px;top:352.2px;width:62.4px;height:4.2px;background:#858585"></div><div class="r" style="left:558.8px;top:352.2px;width:37.9px;height:4.2px;background:#858585"></div><div class="r" style="left:173.6px;top:372.2px;width:45.3px;height:4.2px;background:#858585"></div><div class="r" style="left:430.4px;top:372.2px;width:80.3px;height:4.2px;background:#858585"></div><div class="r" style="left:558.8px;top:372.2px;width:80.9px;height:4.2px;background:#858585"></div><div class="r" style="left:173.6px;top:392.2px;width:57.8px;height:4.2px;background:#858585"></div><div class="r" style="left:173.6px;top:412.2px;width:85.8px;height:4.2px;background:#858585"></div><div class="r" style="left:173.6px;top:432.2px;width:73.0px;height:4.2px;background:#858585"></div><div class="r" style="left:173.6px;top:452.2px;width:50.2px;height:4.2px;background:#858585"></div><div class="r" style="left:52.9px;top:472.2px;width:30.3px;height:4.2px;background:#858585"></div><div class="r" style="left:173.6px;top:472.2px;width:168.7px;height:4.2px;background:#858585"></div><div class="r" style="left:173.6px;top:492.2px;width:68.7px;height:4.2px;background:#858585"></div><div class="r" style="left:173.6px;top:512.2px;width:43.8px;height:4.2px;background:#858585"></div><div class="r" style="left:173.6px;top:532.2px;width:158.2px;height:4.2px;background:#858585"></div><div class="r" style="left:52.9px;top:564.2px;width:52.5px;height:4.2px;background:#858585"></div><div class="r" style="left:173.6px;top:564.2px;width:130.1px;height:4.2px;background:#858585"></div><div class="r" style="left:52.9px;top:631.2px;width:80.5px;height:4.2px;background:#858585"></div><div class="r" style="left:173.6px;top:631.2px;width:217.0px;height:4.2px;background:#858585"></div><div class="r" style="left:52.9px;top:651.2px;width:50.2px;height:4.2px;background:#858585"></div><div class="r" style="left:173.6px;top:651.2px;width:122.0px;height:4.2px;background:#858585"></div><div class="r" style="left:52.9px;top:669.2px;width:54.8px;height:4.2px;background:#858585"></div><div class="r" style="left:173.6px;top:669.2px;width:159.5px;height:4.2px;background:#858585"></div><div class="r" style="left:52.9px;top:709.2px;width:18.1px;height:4.2px;background:#858585"></div><div class="r" style="left:173.6px;top:709.2px;width:150.2px;height:4.2px;background:#858585"></div><div class="r" style="left:430.4px;top:709.2px;width:92.8px;height:4.2px;background:#858585"></div><div class="r" style="left:558.8px;top:709.2px;width:92.8px;height:4.2px;background:#858585"></div><div class="r" style="left:173.6px;top:729.2px;width:63.0px;height:4.2px;background:#858585"></div><div class="r" style="left:430.4px;top:729.2px;width:44.2px;height:4.2px;background:#858585"></div><div class="r" style="left:558.8px;top:729.2px;width:107.8px;height:4.2px;background:#858585"></div><div class="r" style="left:173.6px;top:749.2px;width:27.6px;height:4.2px;background:#858585"></div><div class="r" style="left:430.4px;top:749.2px;width:23.9px;height:4.2px;background:#858585"></div><div class="r" style="left:558.8px;top:749.2px;width:39.8px;height:4.2px;background:#858585"></div><div class="r" style="left:173.6px;top:766.2px;width:113.8px;height:4.2px;background:#858585"></div><div class="r" style="left:430.4px;top:766.2px;width:22.0px;height:4.2px;background:#858585"></div><div class="r" style="left:558.8px;top:766.2px;width:39.8px;height:4.2px;background:#858585"></div><div class="r" style="left:173.6px;top:786.2px;width:80.3px;height:4.2px;background:#858585"></div><div class="r" style="left:430.4px;top:786.2px;width:84.0px;height:4.2px;background:#858585"></div><div class="r" style="left:558.8px;top:786.2px;width:23.3px;height:4.2px;background:#858585"></div><div class="r" style="left:173.6px;top:806.2px;width:134.6px;height:4.2px;background:#858585"></div><div class="r" style="left:430.4px;top:806.2px;width:53.1px;height:4.2px;background:#858585"></div><div class="r" style="left:558.8px;top:806.2px;width:74.6px;height:4.2px;background:#858585"></div><div class="r" style="left:173.6px;top:826.2px;width:105.0px;height:4.2px;background:#858585"></div><div class="r" style="left:430.4px;top:826.2px;width:91.4px;height:4.2px;background:#858585"></div><div class="r" style="left:558.8px;top:826.2px;width:84.4px;height:4.2px;background:#858585"></div><div class="r" style="left:430.4px;top:846.2px;width:61.9px;height:4.2px;background:#858585"></div><div class="r" style="left:558.8px;top:846.2px;width:95.5px;height:4.2px;background:#858585"></div><div class="r" style="left:173.6px;top:864.2px;width:109.1px;height:4.2px;background:#858585"></div><div class="r" style="left:430.4px;top:864.2px;width:61.1px;height:4.2px;background:#858585"></div><div class="r" style="left:558.8px;top:864.2px;width:49.4px;height:4.2px;background:#858585"></div><div class="r" style="left:173.6px;top:884.2px;width:130.1px;height:4.2px;background:#858585"></div><div class="r" style="left:173.6px;top:902.2px;width:167.5px;height:4.2px;background:#858585"></div><div class="r" style="left:44.8px;top:229px;width:727px;height:20px;background:#5f3b99"></div><div class="r" style="left:52.9px;top:237.2px;width:44.3px;height:4.2px;background:#fff"></div><div class="r" style="left:173.6px;top:237.2px;width:78.2px;height:4.2px;background:#e6e0f0"></div><div class="r" style="left:44.8px;top:593px;width:727px;height:20px;background:#5f3b99"></div><div class="r" style="left:52.9px;top:601.2px;width:25.1px;height:4.2px;background:#fff"></div><div class="r" style="left:173.6px;top:601.2px;width:80.0px;height:4.2px;background:#e6e0f0"></div><div class="r" style="left:45px;top:929px;width:726px;height:5.5px;background:#5f3b99"></div><div class="r" style="left:45.0px;top:941.4px;width:175.3px;height:2.6px;background:#858585"></div></div></div><div class="t" style="left:556.6px;top:771.97px;font-size:20px;line-height:20px;color:#f1f1f1;font-weight:normal;letter-spacing:0px;">2</div><div class="r" style="left:481.6px;top:827px;width:162.6px;height:8px;overflow:hidden;background:#9d9fa1"></div><div class="r" style="left:775px;top:227px;width:25px;height:609px;background:#ffffff;"></div><div class="r" style="left:776px;top:227px;width:23px;height:609px;background:#f1f1f1;"></div><div class="r" style="left:777px;top:252px;width:21px;height:168px;background:#c1c1c1;"></div><svg class="r" style="left:781px;top:236px;" width="13" height="8" viewBox="0 0 13 8"><polygon points="0.8,6.8 12.2,6.8 6.5,1" fill="#a3a3a3"/></svg><svg class="r" style="left:781px;top:818px;" width="13" height="9" viewBox="0 0 13 9"><polygon points="0.8,1.8 12.2,1.8 6.5,7.8" fill="#505050"/></svg><div class="r" style="left:1857px;top:227px;width:25px;height:609px;background:#ffffff;"></div><div class="r" style="left:1858px;top:227px;width:24px;height:609px;background:#f1f1f1;"></div><div class="r" style="left:1859px;top:252px;width:21px;height:45px;background:#c1c1c1;"></div><svg class="r" style="left:1863px;top:235px;" width="13" height="9" viewBox="0 0 13 9"><polygon points="0.8,7.8 12.2,7.8 6.5,1.8" fill="#a3a3a3"/></svg><svg class="r" style="left:1863px;top:818px;" width="13" height="9" viewBox="0 0 13 9"><polygon points="0.6,1.9 11.6,1.9 6.1,7.9" fill="#505050"/></svg><div class="r" style="left:775px;top:227px;width:25px;height:7px;background:linear-gradient(rgba(0,0,0,0.12),rgba(0,0,0,0));"></div><div class="r" style="left:1857px;top:227px;width:25px;height:7px;background:linear-gradient(rgba(0,0,0,0.12),rgba(0,0,0,0));"></div><div class="t" style="left:350.2px;top:846.19px;font-size:11px;line-height:11px;color:#8a8a8a;font-weight:normal;letter-spacing:-0.02px;-webkit-text-stroke:0.45px #8a8a8a;">S.20210217.015 | M.20210217.015 | C.20221222.024</div><div class="t" style="right:28.799999999999955px;top:846.19px;font-size:11px;line-height:11px;color:#8a8a8a;font-weight:normal;letter-spacing:0px;-webkit-text-stroke:0.45px #8a8a8a;">Powered by Kinetix Air | © 2023 Kinetix Software LLC | All Rights Reserved</div>
</body></html>
